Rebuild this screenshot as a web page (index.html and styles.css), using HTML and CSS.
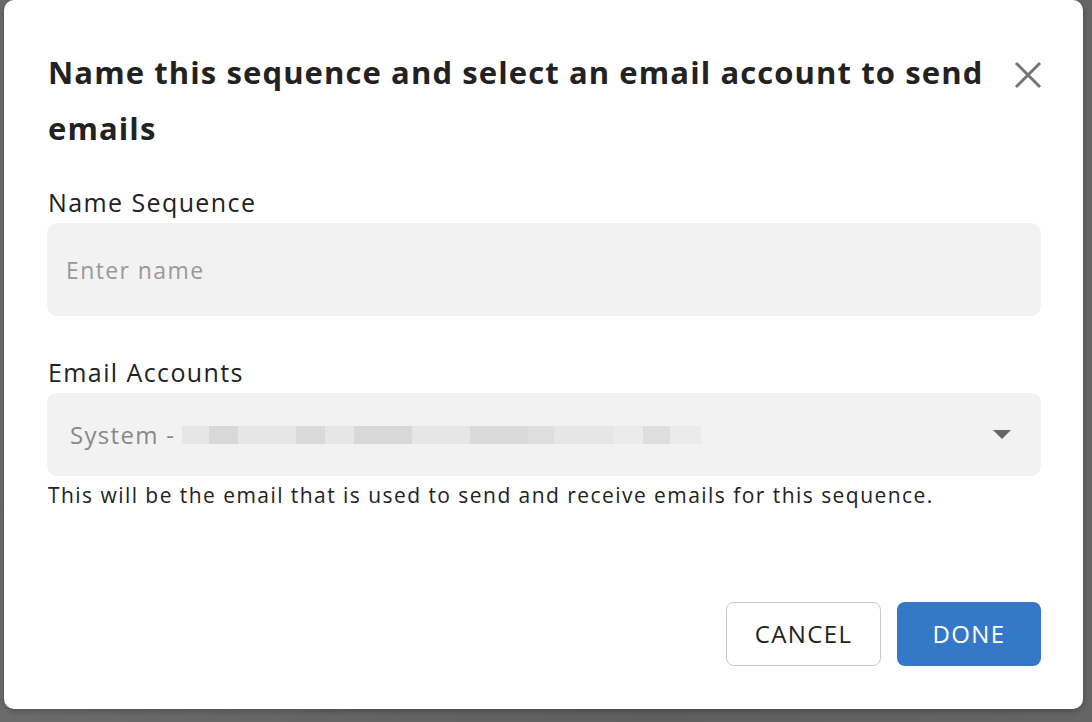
FILE: index.html
```html
<!DOCTYPE html>
<html lang="en">
<head>
    <meta charset="UTF-8">
    <title>Name Sequence</title>
    <link rel="stylesheet" href="styles.css">
</head>
<body>

    <div class="dialog">
        <div class="dialog-head">
            <h2>Name this sequence and select an email account to send emails</h2>
            <button class="close" aria-label="Close">
                <svg width="28" height="28" viewBox="0 0 28 28">
                    <path d="M2 2 L26 26 M26 2 L2 26" stroke="#757575" stroke-width="3" fill="none"/>
                </svg>
            </button>
        </div>

        <label for="nome">Name Sequence</label>
        <input type="text" id="nome" placeholder="Enter name">

        <label for="conta">Email Accounts</label>
        <div class="select" id="conta">
            <span class="select-text">System -</span>
            <span class="blur">
                <i class="b1" style="width:27px"></i><i class="b2" style="width:29px"></i><i class="b1" style="width:58px"></i><i class="b3" style="width:29px"></i><i class="b1" style="width:29px"></i><i class="b2" style="width:58px"></i><i class="b1" style="width:58px"></i><i class="b3" style="width:58px"></i><i class="b4" style="width:26px"></i><i class="b1" style="width:60px"></i><i class="b5" style="width:29px"></i><i class="b4" style="width:27px"></i><i class="b5" style="width:31px"></i>
            </span>
            <span class="caret"></span>
        </div>
        <p class="hint">This will be the email that is used to send and receive emails for this sequence.</p>

        <div class="actions">
            <button class="btn-cancel">CANCEL</button>
            <button class="btn-done">DONE</button>
        </div>
    </div>

</body>
</html>
```

FILE: styles.css
```css
body {
    font-family: "Open Sans", "Liberation Sans", sans-serif;
    background: linear-gradient(90deg, #6b6b6b 0%, #5f5f5f 60%, #656565 100%);
    margin: 0;
    height: 722px;
    overflow: hidden;
}
.dialog {
    width: 1079px;
    height: 709px;
    margin-left: 4px;
    box-sizing: border-box;
    padding: 44px 42px 0 43px;
    background: white;
    border-radius: 10px;
    box-shadow: 0px 2px 6px rgba(0, 0, 0, 0.25);
    color: #222;
}
.dialog-head {
    display: flex;
    justify-content: space-between;
    align-items: flex-start;
}
h2 {
    margin: 0 0 0 1px;
    width: 950px;
    font-size: 31px;
    line-height: 56px;
    letter-spacing: 1.1px;
    font-weight: bold;
    color: #222;
}
.close {
    background: none;
    border: none;
    padding: 0;
    margin-top: 17px;
    margin-right: -1px;
    cursor: pointer;
    width: 28px;
    height: 28px;
}
label {
    display: block;
    margin-top: 30px;
    padding-left: 1px;
    font-size: 25px;
    line-height: 32px;
    letter-spacing: 1.4px;
    color: #222;
}
input {
    display: block;
    width: 100%;
    box-sizing: border-box;
    height: 93px;
    margin-top: 5px;
    padding: 0 19px;
    border: none;
    border-radius: 10px;
    background: #f2f2f2;
    font-family: inherit;
    font-size: 23px;
    letter-spacing: 1.4px;
    color: #222;
}
input::placeholder {
    color: #999;
}
label[for="conta"] {
    margin-top: 40px;
}
.select {
    display: flex;
    align-items: center;
    height: 83px;
    margin-top: 5px;
    padding: 0 30px 0 23px;
    border-radius: 10px;
    background: #f2f2f2;
}
.select-text {
    font-size: 24px;
    letter-spacing: 1.3px;
    color: #888;
}
.blur {
    display: flex;
    margin-left: 7px;
    height: 18px;
    flex: 1;
}
.blur i {
    display: block;
    height: 100%;
}
.b1 { background: #e6e6e6; }
.b2 { background: #d8d8d8; }
.b3 { background: #dadada; }
.b4 { background: #dedede; }
.b5 { background: #ebebeb; }
.caret {
    width: 0;
    height: 0;
    border-left: 9px solid transparent;
    border-right: 9px solid transparent;
    border-top: 9px solid #666;
}
.hint {
    margin: 5px 0 0 1px;
    font-size: 21px;
    line-height: 28px;
    letter-spacing: 1.45px;
    color: #222;
}
.actions {
    display: flex;
    justify-content: flex-end;
    gap: 16px;
    margin-top: 93px;
}
.actions button {
    height: 64px;
    padding-bottom: 3px;
    border-radius: 8px;
    font-family: inherit;
    font-size: 24px;
    letter-spacing: 1.4px;
    cursor: pointer;
}
.btn-cancel {
    width: 155px;
    background: white;
    color: #222;
    border: 1px solid #c8c8c8;
}
.btn-done {
    width: 144px;
    background: #3578c7;
    color: white;
    border: none;
}
```
